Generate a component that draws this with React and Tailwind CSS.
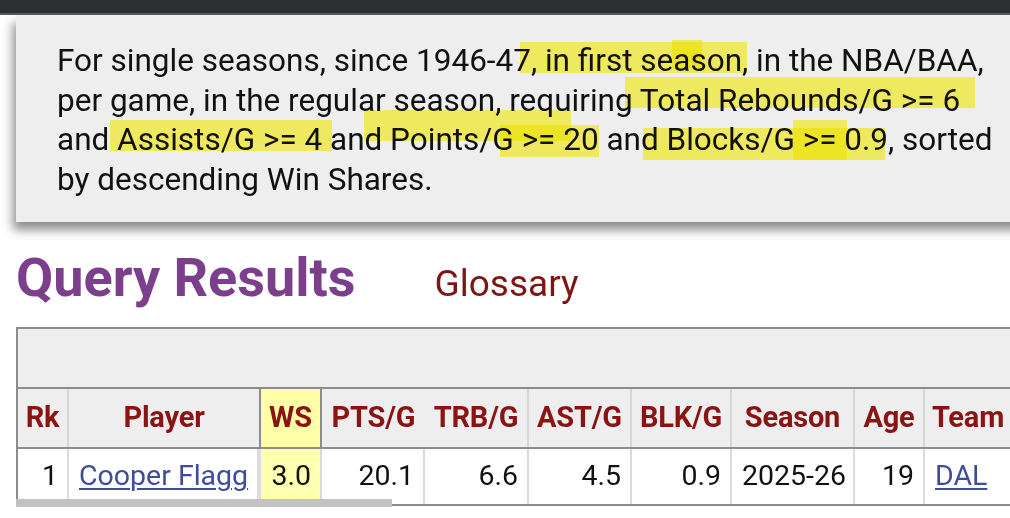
import React from 'react';

const HIGHLIGHTS = [
    [520, 42, 747, 73],
    [672, 40, 702, 68],
    [625, 77, 975, 108],
    [110, 120, 332, 151],
    [364, 110, 571, 141],
    [500, 125, 599, 157],
    [643, 128, 885, 160],
    [793, 120, 847, 160],
];

const COLS = [
    { key: 'rk', label: 'Rk', w: 'w-[51px]', align: 'text-right' },
    { key: 'player', label: 'Player', w: 'w-[190px]', align: 'text-left' },
    { key: 'ws', label: 'WS', w: 'w-[63px]', align: 'text-right' },
    { key: 'pts', label: 'PTS/G', w: 'w-[103px]', align: 'text-right' },
    { key: 'trb', label: 'TRB/G', w: 'w-[104px]', align: 'text-right' },
    { key: 'ast', label: 'AST/G', w: 'w-[103px]', align: 'text-right' },
    { key: 'blk', label: 'BLK/G', w: 'w-[100px]', align: 'text-right' },
    { key: 'season', label: 'Season', w: 'w-[123px]', align: 'text-left' },
    { key: 'age', label: 'Age', w: 'w-[70px]', align: 'text-right' },
    { key: 'team', label: 'Team', w: 'w-[88px]', align: 'text-left' },
];

const ROW = {
    rk: '1', player: 'Cooper Flagg', ws: '3.0', pts: '20.1', trb: '6.6',
    ast: '4.5', blk: '0.9', season: '2025-26', age: '19', team: 'DAL',
};

const App = () => {
    return (
        <div className="relative w-[1010px] h-[518px] overflow-hidden bg-white font-['Roboto',sans-serif]">
            {/* browser chrome strip */}
            <div className="h-[15px] bg-[#2e2f33] border-b-2 border-[#57595c]" />

            {/* query description box */}
            <div className="ml-4 w-[1010px] h-[207px] bg-[#eeeeee] shadow-[-3px_8px_10px_rgba(0,0,0,0.45)] pl-[41px] pt-[26px] text-[31.5px] leading-[39.5px] text-[#111] whitespace-nowrap">
                For single seasons, since 1946-47, in first season, in the NBA/BAA,<br />
                per game, in the regular season, requiring Total Rebounds/G &gt;= 6<br />
                and Assists/G &gt;= 4 and Points/G &gt;= 20 and Blocks/G &gt;= 0.9, sorted<br />
                by descending Win Shares.
            </div>

            {/* marker strokes */}
            {HIGHLIGHTS.map(([x0, y0, x1, y1], i) => (
                <div
                    key={i}
                    className="absolute bg-[#fff700]/60 mix-blend-multiply"
                    style={{ left: x0, top: y0, width: x1 - x0, height: y1 - y0 }}
                />
            ))}

            {/* heading */}
            <div className="flex items-baseline gap-[79px] pl-4 mt-[29px] h-[53px]">
                <h1 className="text-[54px] leading-[53px] font-bold text-[#7b3f8c]">Query Results</h1>
                <span className="text-[37px] leading-none text-[#7e1515]">Glossary</span>
            </div>

            {/* results table */}
            <div className="ml-4 mt-[23px] w-[1030px] border-2 border-[#8c8c8c] bg-[#eeeeee]">
                <div className="h-[58px]" />
                <div className="flex h-[62px] border-y-2 border-[#8c8c8c]">
                    {COLS.map(c => (
                        <div
                            key={c.key}
                            className={`${c.w} shrink-0 flex items-center justify-center text-[29px] font-bold tracking-[-0.2px] text-[#8a1313] ${
                                c.key === 'ws'
                                    ? 'bg-[#ffffa8] border-x-2 border-[#8c8c8c]'
                                    : c.key === 'player' || c.key === 'pts'
                                        ? ''
                                        : 'border-r-2 border-[#d6d6d6]'
                            }`}
                        >
                            {c.label}
                        </div>
                    ))}
                </div>
                <div className="flex h-[55px] bg-white">
                    {COLS.map(c => (
                        <div
                            key={c.key}
                            className={`${c.w} shrink-0 flex items-center ${c.align} ${
                                c.align === 'text-right' ? 'justify-end pr-[9px]' : 'justify-start pl-[10px]'
                            } border-r-2 border-[#dcdcdc] text-[28.5px] text-[#111] ${c.key === 'ws' ? 'bg-[#ffffb0] border-l-2' : ''}`}
                        >
                            {c.key === 'player' || c.key === 'team' ? (
                                <a href="#" className="text-[#3e4c9c] underline underline-offset-[3px] decoration-2">{ROW[c.key]}</a>
                            ) : (
                                ROW[c.key]
                            )}
                        </div>
                    ))}
                </div>
            </div>

            {/* horizontal scrollbar thumb */}
            <div className="absolute left-4 top-[499px] w-[376px] h-[8px] bg-[#c2c2c2]" />
        </div>
    );
};

export default App;
